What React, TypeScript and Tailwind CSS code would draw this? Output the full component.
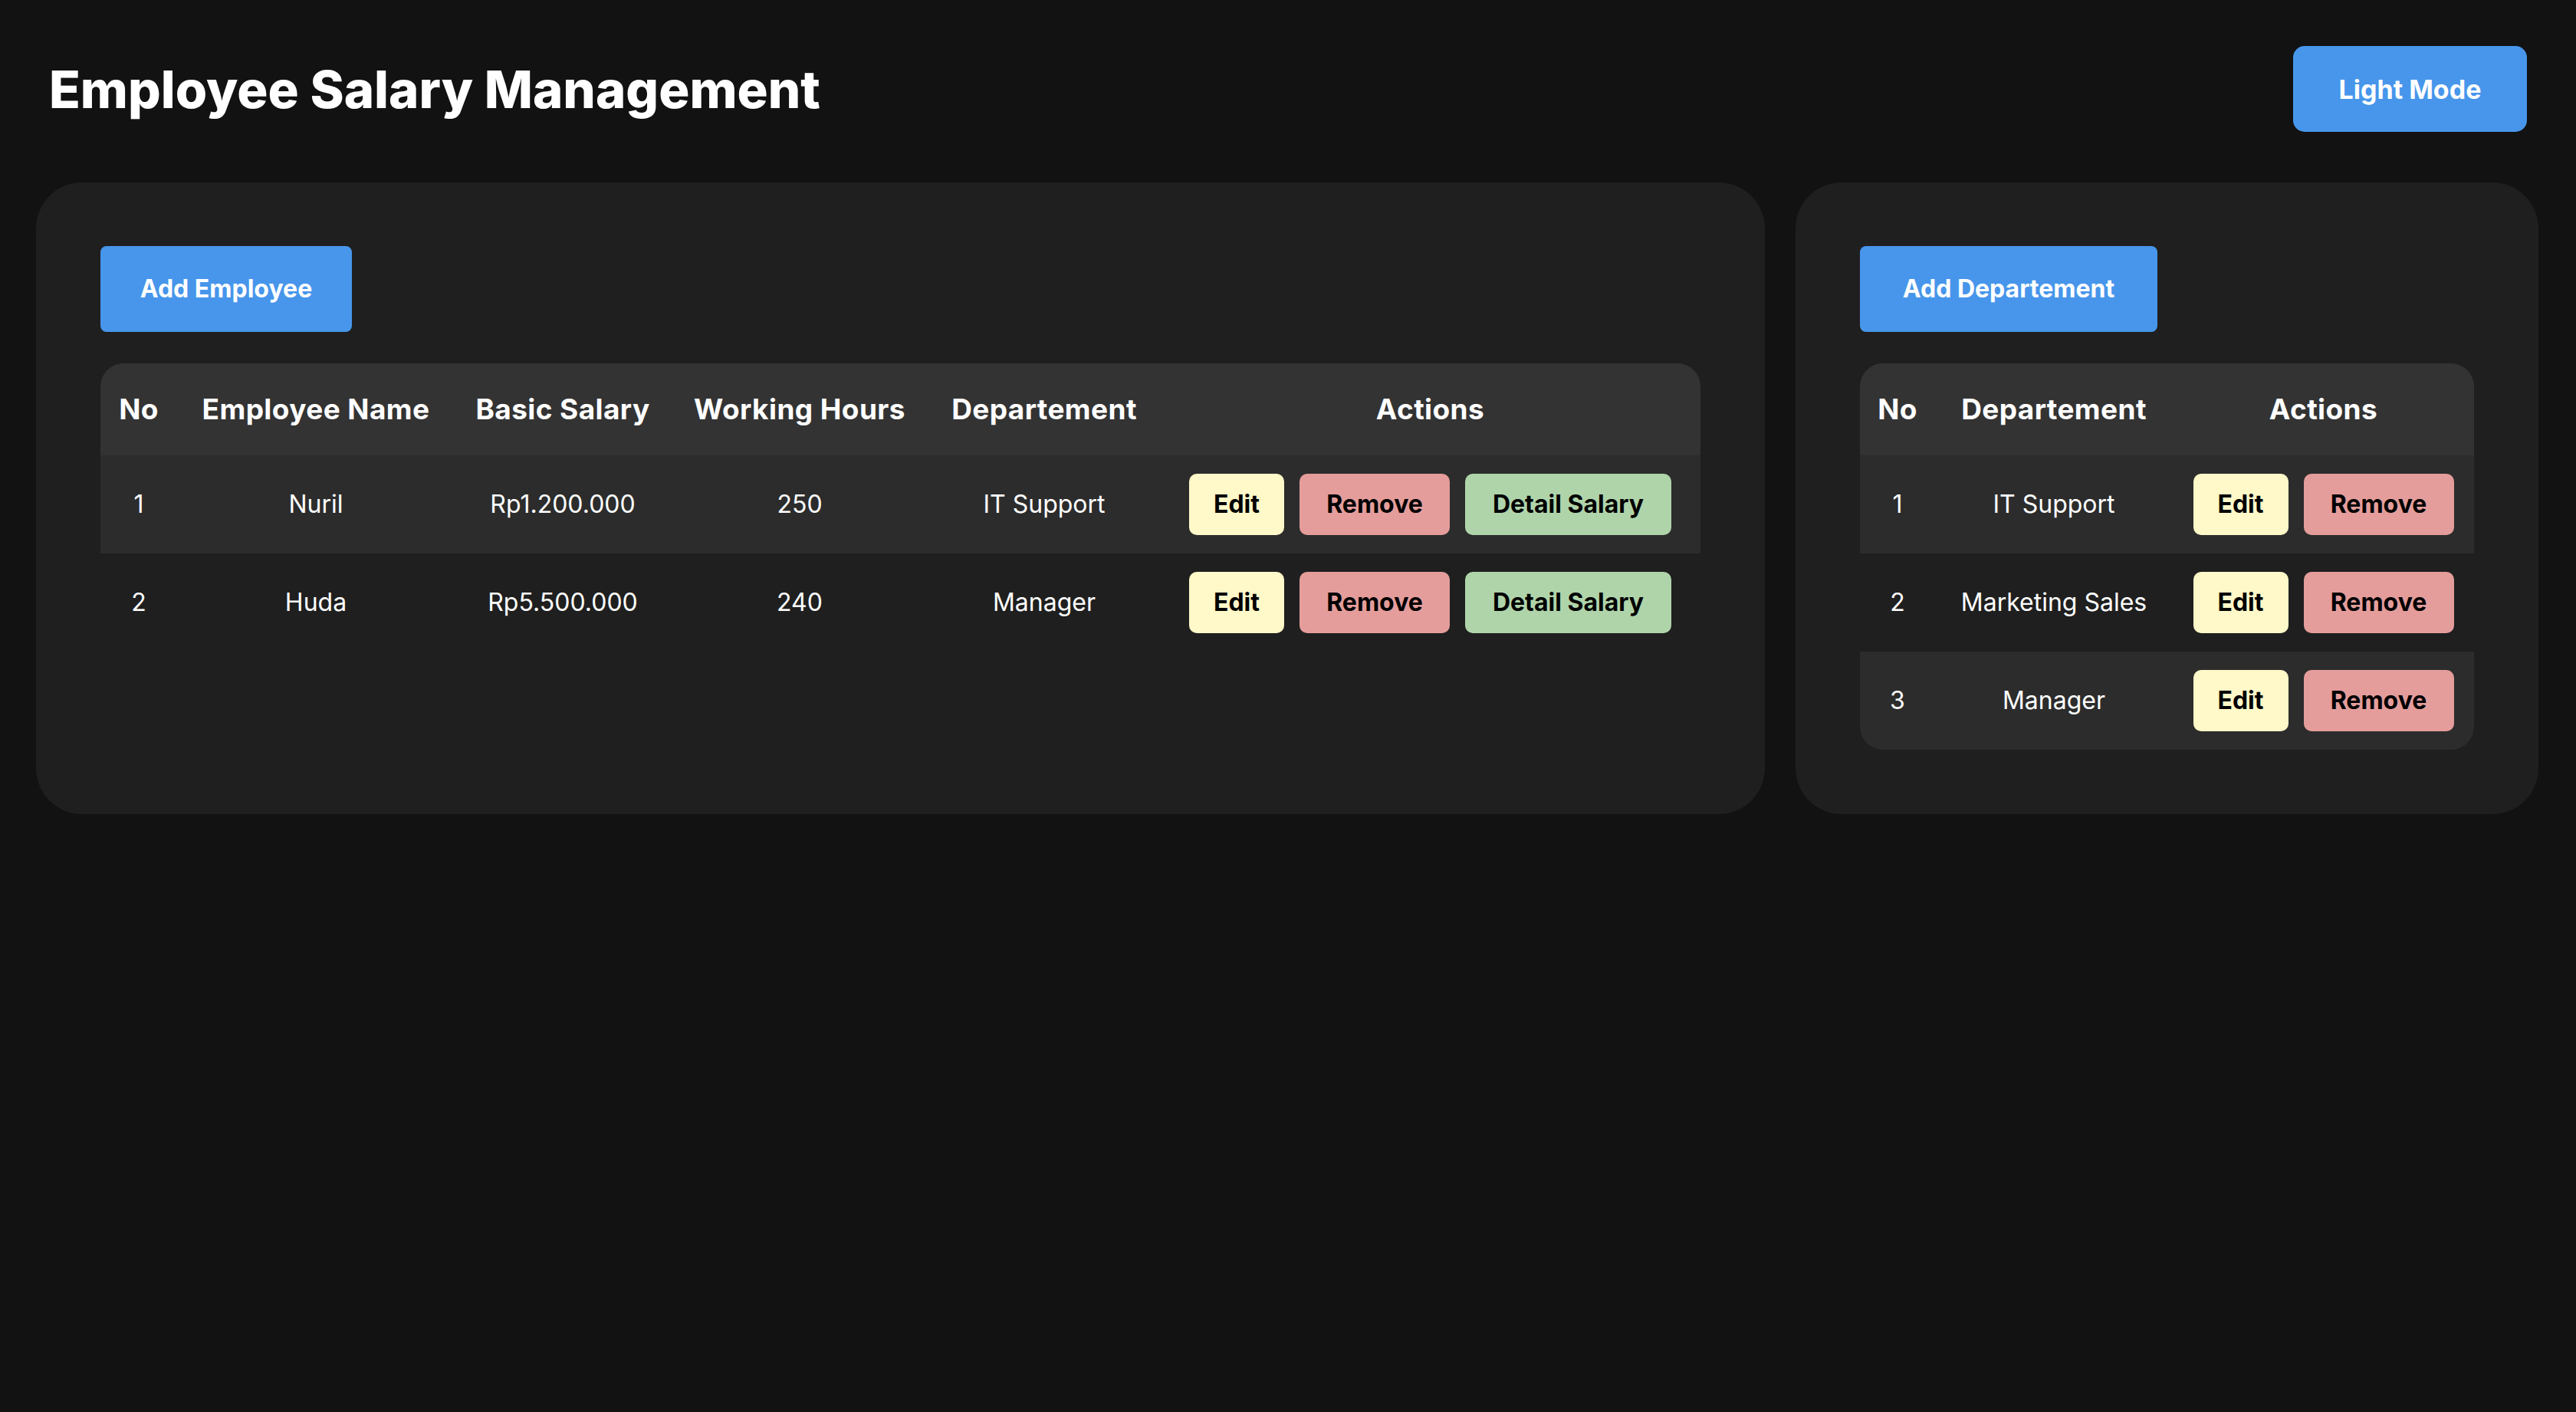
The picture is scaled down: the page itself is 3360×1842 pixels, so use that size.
import { useState } from 'react';

interface Employee {
    id: number;
    name: string;
    salary: string;
    hours: number;
    departement: string;
}

interface Departement {
    id: number;
    name: string;
}

const employees: Employee[] = [
    { id: 1, name: 'Nuril', salary: 'Rp1.200.000', hours: 250, departement: 'IT Support' },
    { id: 2, name: 'Huda', salary: 'Rp5.500.000', hours: 240, departement: 'Manager' },
];

const departements: Departement[] = [
    { id: 1, name: 'IT Support' },
    { id: 2, name: 'Marketing Sales' },
    { id: 3, name: 'Manager' },
];

function ActionButton({ label, color, width }: { label: string; color: string; width: string }) {
    return (
        <button className={`${color} ${width} h-[80px] rounded-[10px] text-black text-[32px] font-bold`}>
            {label}
        </button>
    );
}

function App() {
    const [dark, setDark] = useState(true);

    return (
        <div
            className="min-h-screen bg-[#121212] text-white pb-20"
            style={{ fontFamily: 'Inter, "Noto Sans", sans-serif' }}
        >
            {/* Header */}
            <div className="flex justify-between items-center pl-16 pr-16 pt-[60px]">
                <h1 className="text-[67px] font-extrabold leading-none">Employee Salary Management</h1>
                <button
                    onClick={() => setDark(!dark)}
                    className="w-[305px] h-[112px] rounded-[15px] bg-[#4796eb] text-white text-[34px] font-bold"
                >
                    {dark ? 'Light Mode' : 'Dark Mode'}
                </button>
            </div>

            <div className="flex gap-10 pl-[47px] pr-[49px] mt-[66px]">
                {/* Employees */}
                <div className="flex-1 bg-[#1f1f1f] rounded-[60px] p-[84px] pt-[83px]">
                    <button className="w-[328px] h-[112px] rounded-[8px] bg-[#4796eb] text-white text-[32px] font-bold">
                        Add Employee
                    </button>
                    <div className="mt-[41px] rounded-[30px] overflow-hidden bg-[#1e1e1e]">
                        <table className="w-full table-fixed text-center">
                            <colgroup>
                                <col className="w-[100px]" />
                                <col className="w-[362px]" />
                                <col className="w-[282px]" />
                                <col className="w-[336px]" />
                                <col className="w-[302px]" />
                                <col />
                            </colgroup>
                            <thead>
                                <tr className="bg-[#333333] h-[120px] text-[37px] font-extrabold tracking-[0.4px]">
                                    <th>No</th>
                                    <th>Employee Name</th>
                                    <th>Basic Salary</th>
                                    <th>Working Hours</th>
                                    <th>Departement</th>
                                    <th>Actions</th>
                                </tr>
                            </thead>
                            <tbody className="text-[32px]">
                                {employees.map((emp, i) => (
                                    <tr key={emp.id} className={`h-[128px] ${i % 2 === 0 ? 'bg-[#2c2c2c]' : 'bg-[#1f1f1f]'}`}>
                                        <td>{emp.id}</td>
                                        <td>{emp.name}</td>
                                        <td>{emp.salary}</td>
                                        <td>{emp.hours}</td>
                                        <td>{emp.departement}</td>
                                        <td>
                                            <div className="flex justify-center gap-5">
                                                <ActionButton label="Edit" color="bg-[#fff8c8]" width="w-[124px]" />
                                                <ActionButton label="Remove" color="bg-[#e49d9b]" width="w-[196px]" />
                                                <ActionButton label="Detail Salary" color="bg-[#afd4aa]" width="w-[269px]" />
                                            </div>
                                        </td>
                                    </tr>
                                ))}
                            </tbody>
                        </table>
                    </div>
                </div>

                {/* Departements */}
                <div className="w-[969px] bg-[#1f1f1f] rounded-[60px] p-[84px] pt-[83px]">
                    <button className="w-[388px] h-[112px] rounded-[8px] bg-[#4796eb] text-white text-[32px] font-bold">
                        Add Departement
                    </button>
                    <div className="mt-[41px] rounded-[30px] overflow-hidden bg-[#1e1e1e]">
                        <table className="w-full table-fixed text-center">
                            <colgroup>
                                <col className="w-[98px]" />
                                <col className="w-[310px]" />
                                <col />
                            </colgroup>
                            <thead>
                                <tr className="bg-[#333333] h-[120px] text-[37px] font-extrabold tracking-[0.4px]">
                                    <th>No</th>
                                    <th>Departement</th>
                                    <th>Actions</th>
                                </tr>
                            </thead>
                            <tbody className="text-[32px]">
                                {departements.map((dep, i) => (
                                    <tr key={dep.id} className={`h-[128px] ${i % 2 === 0 ? 'bg-[#2c2c2c]' : 'bg-[#1f1f1f]'}`}>
                                        <td>{dep.id}</td>
                                        <td>{dep.name}</td>
                                        <td>
                                            <div className="flex justify-center gap-5">
                                                <ActionButton label="Edit" color="bg-[#fff8c8]" width="w-[124px]" />
                                                <ActionButton label="Remove" color="bg-[#e49d9b]" width="w-[196px]" />
                                            </div>
                                        </td>
                                    </tr>
                                ))}
                            </tbody>
                        </table>
                    </div>
                </div>
            </div>
        </div>
    );
}

export default App;
